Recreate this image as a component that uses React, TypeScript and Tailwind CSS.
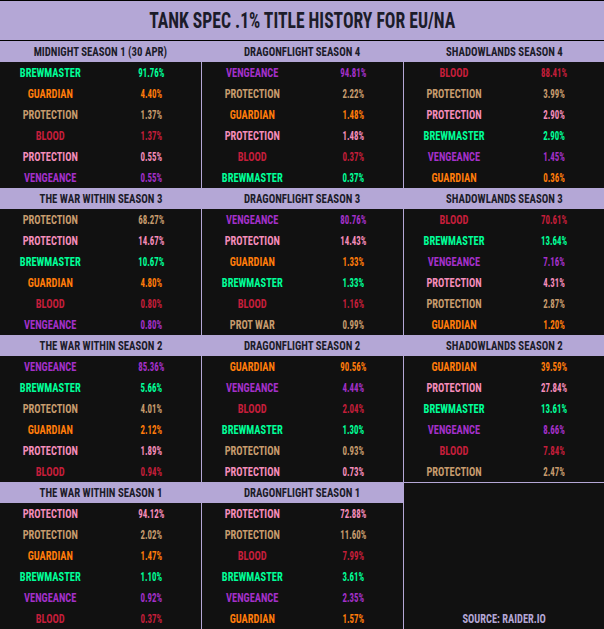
const C = {
  brew: "text-[#00ff98]",
  guard: "text-[#ff7c0a]",
  warr: "text-[#c69b6d]",
  blood: "text-[#c41e3a]",
  pala: "text-[#f48cba]",
  veng: "text-[#a330c9]",
};

type Row = [string, string, string];

const seasons: { title: string; rows: Row[] }[][] = [
  [
    {
      title: "MIDNIGHT SEASON 1 (30 APR)",
      rows: [
        ["BREWMASTER", "91.76%", C.brew],
        ["GUARDIAN", "4.40%", C.guard],
        ["PROTECTION", "1.37%", C.warr],
        ["BLOOD", "1.37%", C.blood],
        ["PROTECTION", "0.55%", C.pala],
        ["VENGEANCE", "0.55%", C.veng],
      ],
    },
    {
      title: "DRAGONFLIGHT SEASON 4",
      rows: [
        ["VENGEANCE", "94.81%", C.veng],
        ["PROTECTION", "2.22%", C.warr],
        ["GUARDIAN", "1.48%", C.guard],
        ["PROTECTION", "1.48%", C.pala],
        ["BLOOD", "0.37%", C.blood],
        ["BREWMASTER", "0.37%", C.brew],
      ],
    },
    {
      title: "SHADOWLANDS SEASON 4",
      rows: [
        ["BLOOD", "88.41%", C.blood],
        ["PROTECTION", "3.99%", C.warr],
        ["PROTECTION", "2.90%", C.pala],
        ["BREWMASTER", "2.90%", C.brew],
        ["VENGEANCE", "1.45%", C.veng],
        ["GUARDIAN", "0.36%", C.guard],
      ],
    },
  ],
  [
    {
      title: "THE WAR WITHIN SEASON 3",
      rows: [
        ["PROTECTION", "68.27%", C.warr],
        ["PROTECTION", "14.67%", C.pala],
        ["BREWMASTER", "10.67%", C.brew],
        ["GUARDIAN", "4.80%", C.guard],
        ["BLOOD", "0.80%", C.blood],
        ["VENGEANCE", "0.80%", C.veng],
      ],
    },
    {
      title: "DRAGONFLIGHT SEASON 3",
      rows: [
        ["VENGEANCE", "80.76%", C.veng],
        ["PROTECTION", "14.43%", C.pala],
        ["GUARDIAN", "1.33%", C.guard],
        ["BREWMASTER", "1.33%", C.brew],
        ["BLOOD", "1.16%", C.blood],
        ["PROT WAR", "0.99%", C.warr],
      ],
    },
    {
      title: "SHADOWLANDS SEASON 3",
      rows: [
        ["BLOOD", "70.61%", C.blood],
        ["BREWMASTER", "13.64%", C.brew],
        ["VENGEANCE", "7.16%", C.veng],
        ["PROTECTION", "4.31%", C.pala],
        ["PROTECTION", "2.87%", C.warr],
        ["GUARDIAN", "1.20%", C.guard],
      ],
    },
  ],
  [
    {
      title: "THE WAR WITHIN SEASON 2",
      rows: [
        ["VENGEANCE", "85.36%", C.veng],
        ["BREWMASTER", "5.66%", C.brew],
        ["PROTECTION", "4.01%", C.warr],
        ["GUARDIAN", "2.12%", C.guard],
        ["PROTECTION", "1.89%", C.pala],
        ["BLOOD", "0.94%", C.blood],
      ],
    },
    {
      title: "DRAGONFLIGHT SEASON 2",
      rows: [
        ["GUARDIAN", "90.56%", C.guard],
        ["VENGEANCE", "4.44%", C.veng],
        ["BLOOD", "2.04%", C.blood],
        ["BREWMASTER", "1.30%", C.brew],
        ["PROTECTION", "0.93%", C.warr],
        ["PROTECTION", "0.73%", C.pala],
      ],
    },
    {
      title: "SHADOWLANDS SEASON 2",
      rows: [
        ["GUARDIAN", "39.59%", C.guard],
        ["PROTECTION", "27.84%", C.pala],
        ["BREWMASTER", "13.61%", C.brew],
        ["VENGEANCE", "8.66%", C.veng],
        ["BLOOD", "7.84%", C.blood],
        ["PROTECTION", "2.47%", C.warr],
      ],
    },
  ],
  [
    {
      title: "THE WAR WITHIN SEASON 1",
      rows: [
        ["PROTECTION", "94.12%", C.pala],
        ["PROTECTION", "2.02%", C.warr],
        ["GUARDIAN", "1.47%", C.guard],
        ["BREWMASTER", "1.10%", C.brew],
        ["VENGEANCE", "0.92%", C.veng],
        ["BLOOD", "0.37%", C.blood],
      ],
    },
    {
      title: "DRAGONFLIGHT SEASON 1",
      rows: [
        ["PROTECTION", "72.88%", C.pala],
        ["PROTECTION", "11.60%", C.warr],
        ["BLOOD", "7.99%", C.blood],
        ["BREWMASTER", "3.61%", C.brew],
        ["VENGEANCE", "2.35%", C.veng],
        ["GUARDIAN", "1.57%", C.guard],
      ],
    },
  ],
];

function Season({ title, rows }: { title: string; rows: Row[] }) {
  return (
    <div className="flex flex-col">
      <div className="h-[21px] bg-[#b4a7d6] text-[#1c1c2a] text-[13px] font-bold flex items-center justify-center">
        <span className="inline-block whitespace-nowrap scale-x-[0.83]">{title}</span>
      </div>
      {rows.map(([label, value, color], i) => (
        <div key={i} className={`h-[21px] grid grid-cols-2 items-center text-center text-[13px] font-bold ${color}`}>
          <span className="inline-block whitespace-nowrap scale-x-[0.8]">{label}</span>
          <span className="inline-block whitespace-nowrap scale-x-[0.68]">{value}</span>
        </div>
      ))}
    </div>
  );
}

export default function App() {
  return (
    <div
      className="w-[604px] h-[629px] bg-[#111111] overflow-hidden"
      style={{ fontFamily: '"Roboto Condensed", "Liberation Sans Narrow", "DejaVu Sans Condensed", sans-serif' }}
    >
      <div className="h-[41px] bg-[#b4a7d6] border-y border-black flex items-center justify-center text-[22px] font-bold text-[#1c1c2a]">
        <span className="inline-block whitespace-nowrap scale-x-[0.8]">TANK SPEC .1% TITLE HISTORY FOR EU/NA</span>
      </div>
      {seasons.map((band, b) => (
        <div key={b} className="grid grid-cols-[201px_202px_201px]">
          {band.map((s, i) => (
            <div key={i} className={i > 0 ? "border-l border-[#b4a7d6]" : ""}>
              <Season title={s.title} rows={s.rows} />
            </div>
          ))}
          {band.length < 3 && (
            <div className="border-l border-t border-[#b4a7d6] flex items-end justify-center pb-[1px]">
              <span className="inline-block whitespace-nowrap scale-x-[0.8] text-[#b4a7d6] text-[13px] font-bold">
                SOURCE: RAIDER.IO
              </span>
            </div>
          )}
        </div>
      ))}
    </div>
  );
}
